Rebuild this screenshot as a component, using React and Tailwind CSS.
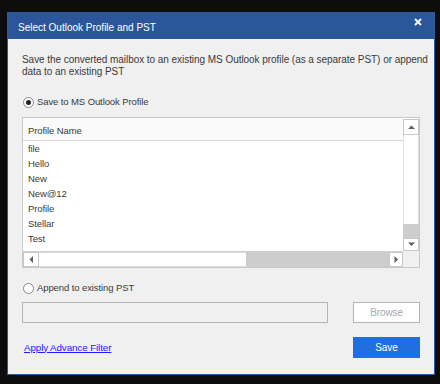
import React from "react";

const profiles = ["file", "Hello", "New", "New@12", "Profile", "Stellar", "Test"];

function Arrow({ dir }) {
  const pts = {
    up: "0,4 3.5,0.5 7,4",
    down: "0,0.5 3.5,4 7,0.5",
    left: "4,0 0.5,3.5 4,7",
    right: "0.5,0 4,3.5 0.5,7",
  }[dir];
  const vertical = dir === "up" || dir === "down";
  return (
    <svg width={vertical ? 7 : 5} height={vertical ? 5 : 7} viewBox={vertical ? "0 0 7 5" : "0 0 5 7"}>
      <polygon points={pts} fill="#606060" />
    </svg>
  );
}

function Radio({ checked, label }) {
  return (
    <div className="h-[12px] flex items-center gap-[3px] leading-[12px]">
      <div className="w-[11px] h-[11px] rounded-full border border-[#8a8a8a] bg-white flex items-center justify-center">
        {checked && <div className="w-[5px] h-[5px] rounded-full bg-[#222]" />}
      </div>
      <span>{label}</span>
    </div>
  );
}

export default function App() {
  return (
    <div
      className="w-[440px] h-[384px] bg-[#0d0d0d] pt-[12px] pl-[7px] text-[9.5px] tracking-[-0.1px] text-[#3a3a3a]"
      style={{ fontFamily: '"Liberation Sans", Arial, sans-serif' }}
    >
      <div className="w-[428px] h-[363px] border border-[#2b5aa0] bg-[#f0f0f0] flex flex-col">
        <div className="h-[26px] bg-[#2b579a] flex justify-between pl-[10px] pr-[12px] text-white text-[10px] tracking-normal leading-[12px]">
          <span className="pt-[9px]">Select Outlook Profile and PST</span>
          <svg className="mt-[5px]" width="8" height="8" viewBox="0 0 8 8">
            <path d="M1 1L7 7M7 1L1 7" stroke="white" strokeWidth="1.8" />
          </svg>
        </div>

        <div className="px-[14px] pt-[15px] flex flex-col">
          <p className="leading-[12px] text-[10px] tracking-[-0.05px] whitespace-nowrap">
            Save the converted mailbox to an existing MS Outlook profile (as a separate PST) or append
            <br />
            data to an existing PST
          </p>

          <div className="mt-[18px] pl-[1px]">
            <Radio checked label="Save to MS Outlook Profile" />
          </div>

          <div className="mt-[9px] h-[151px] border border-[#c8c8c8] bg-white grid grid-cols-[1fr_16px] grid-rows-[1fr_16px]">
            <div className="flex flex-col overflow-hidden">
              <div className="h-[23px] border-b border-[#dadada] bg-[#fafafa] pl-[5px] pt-[7px] leading-[12px]">
                Profile Name
              </div>
              <div>
                {profiles.map((p) => (
                  <div key={p} className="h-[15px] leading-[15px] pl-[5px]">
                    {p}
                  </div>
                ))}
              </div>
            </div>

            <div className="flex flex-col pt-[1px]">
              <div className="h-[16px] border border-[#c8c8c8] bg-white flex items-center justify-center">
                <Arrow dir="up" />
              </div>
              <div className="flex-1 bg-white border-x border-[#dedede]" />
              <div className="h-[14px] bg-[#cdcdcd]" />
              <div className="h-[13px] border border-[#c8c8c8] bg-white flex items-center justify-center">
                <Arrow dir="down" />
              </div>
            </div>

            <div className="flex border-t border-[#d0d0d0]">
              <div className="w-[16px] border border-[#c8c8c8] bg-white flex items-center justify-center">
                <Arrow dir="left" />
              </div>
              <div className="w-[207px] border-y border-[#dedede] bg-white" />
              <div className="flex-1 bg-[#cdcdcd]" />
              <div className="w-[14px] border border-[#c8c8c8] bg-white flex items-center justify-center">
                <Arrow dir="right" />
              </div>
            </div>
            <div className="bg-[#f0f0f0]" />
          </div>

          <div className="mt-[14px] pl-[1px]">
            <Radio label="Append to existing PST" />
          </div>

          <div className="mt-[8px] flex justify-between">
            <div className="w-[306px] h-[21px] border border-[#b4b4b4] bg-[#f0f0f0]" />
            <button className="w-[67px] h-[21px] border border-[#b4b4b4] bg-white text-[#a8a8a8] text-[10px] leading-[12px]">
              Browse
            </button>
          </div>

          <div className="mt-[14px] flex justify-between items-center">
            <a href="#" className="pl-[2px] text-[#1a1aff] underline leading-[12px] text-[9.8px]">
              Apply Advance Filter
            </a>
            <button className="w-[67px] h-[21px] bg-[#1f6fe0] text-white text-[10px] leading-[12px]">Save</button>
          </div>
        </div>
      </div>
    </div>
  );
}
